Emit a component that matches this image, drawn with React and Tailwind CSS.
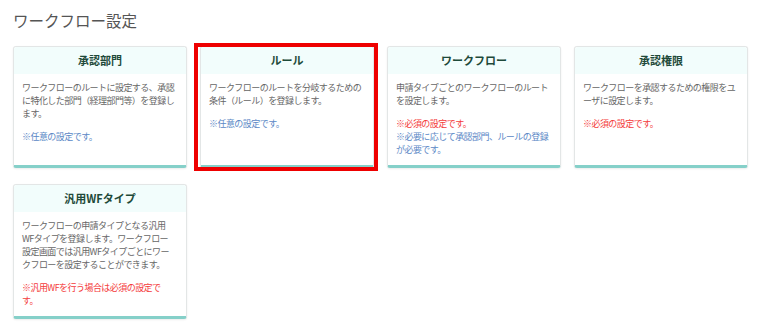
import React from 'react';

const cards = [
  {
    title: '承認部門',
    desc: 'ワークフローのルートに設定する、承認に特化した部門（経理部門等）を登録します。',
    notes: [{ tone: 'blue', text: '※任意の設定です。' }],
  },
  {
    title: 'ルール',
    desc: 'ワークフローのルートを分岐するための条件（ルール）を登録します。',
    notes: [{ tone: 'blue', text: '※任意の設定です。' }],
    selected: true,
  },
  {
    title: 'ワークフロー',
    desc: '申請タイプごとのワークフローのルートを設定します。',
    notes: [
      { tone: 'red', text: '※必須の設定です。' },
      { tone: 'blue', text: '※必要に応じて承認部門、ルールの登録が必要です。' },
    ],
  },
  {
    title: '承認権限',
    desc: 'ワークフローを承認するための権限をユーザに設定します。',
    notes: [{ tone: 'red', text: '※必須の設定です。' }],
  },
  {
    title: '汎用WFタイプ',
    desc: 'ワークフローの申請タイプとなる汎用WFタイプを登録します。ワークフロー設定画面では汎用WFタイプごとにワークフローを設定することができます。',
    notes: [{ tone: 'red', text: '※汎用WFを行う場合は必須の設定です。' }],
  },
];

function SettingCard({ title, desc, notes, selected }) {
  return (
    <div className="relative flex w-[174px] flex-col rounded-[3px] border border-[#e3e6e6] border-b-[3px] border-b-[#85d0c9] bg-white shadow-[0_1px_2px_rgba(0,0,0,0.08)]">
      {/* selection frame */}
      {selected && (
        <span className="pointer-events-none absolute -top-[4px] -bottom-[6px] -left-[7px] -right-[5px] border-[4px] border-[#ee0000]" />
      )}
      <div className="flex h-[27px] items-center justify-center rounded-t-[3px] bg-[#f2fdfc] text-[11px] font-bold text-[#1e4a3a]">
        {title}
      </div>
      <div className="pl-[8px] pr-[11px] pt-[7px] pb-[9px] text-[9px] leading-[13px] tracking-[-0.55px] [line-break:loose]">
        <p className="text-[#666]">{desc}</p>
        <div className="mt-[10px]">
          {notes.map((n, i) => (
            <p key={i} className={n.tone === 'red' ? 'text-[#f43b3b]' : 'text-[#5b88c6]'}>
              {n.text}
            </p>
          ))}
        </div>
      </div>
    </div>
  );
}

export default function App() {
  return (
    <div className="min-h-[333px] w-[773px] bg-white px-[13px] pt-[9px] font-['Noto_Sans_CJK_JP','Noto_Sans',sans-serif]">
      <h1 className="text-[15.5px] leading-[22px] font-normal text-[#555]">ワークフロー設定</h1>
      <div className="mt-[15px] flex flex-wrap gap-x-[13px] gap-y-[16px]">
        {cards.map((c) => (
          <SettingCard key={c.title} {...c} />
        ))}
      </div>
    </div>
  );
}
